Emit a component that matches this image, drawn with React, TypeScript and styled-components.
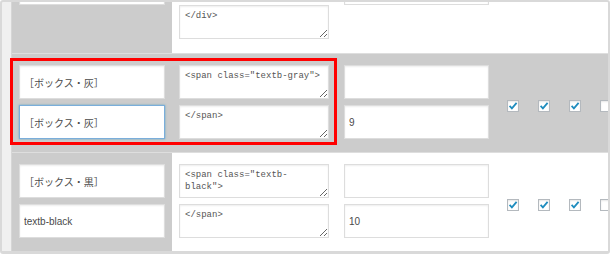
import React from "react";
import styled, { createGlobalStyle } from "styled-components";

const GlobalStyle = createGlobalStyle`
  html, body { margin: 0; padding: 0; background: #fff; }
  body { font-family: "Liberation Sans", "Noto Sans CJK JP", sans-serif; }
`;

const Frame = styled.div`
  position: relative;
  box-sizing: border-box;
  width: 610px;
  height: 254px;
  border: 2px solid #d9d9d9;
  border-bottom-width: 3px;
  border-radius: 3px;
  background: #f0f0f0;
  padding-left: 9px;
  overflow: hidden;
`;

const Table = styled.div`
  margin-top: -116px;
  border-left: 1px solid #d6d6d6;
  display: flex;
  flex-direction: column;
`;

const Row = styled.div<{ $shaded?: boolean; $pb: number }>`
  --pb: ${(p) => p.$pb}px;
  display: grid;
  grid-template-columns: 160px 165px 160px 1fr;
  background: ${(p) => (p.$shaded ? "#cccccc" : "#ffffff")};
  border-bottom: 1px solid #dedede;
  &:last-child { border-bottom: 0; }
`;

const HeadCell = styled.div`
  background: #cccccc;
  padding: 11px 7px var(--pb) 7px;
  display: flex;
  flex-direction: column;
  justify-content: center;
  gap: 6px;
`;

const Cell = styled.div`
  padding: 11px 8px var(--pb) 7px;
  display: flex;
  flex-direction: column;
  justify-content: center;
  gap: 6px;
`;

const CheckCell = styled.div`
  padding: 11px 0 var(--pb) 10px;
  display: flex;
  align-items: center;
  gap: 19px;
`;

const TextInput = styled.input<{ $focused?: boolean }>`
  box-sizing: border-box;
  width: 100%;
  height: 34px;
  margin: 0;
  padding: 0 4px;
  border: 1px solid ${(p) => (p.$focused ? "#7aaedb" : "#dddddd")};
  box-shadow: ${(p) =>
    p.$focused ? "0 0 2px rgba(30,140,190,0.6)" : "inset 0 1px 2px rgba(0,0,0,0.07)"};
  background: #fff;
  color: #4a4a4a;
  font: 10px "Liberation Sans", "Noto Sans CJK JP", sans-serif;
  outline: none;
`;

const CodeArea = styled.textarea<{ $h?: number }>`
  box-sizing: border-box;
  width: 100%;
  height: ${(p) => p.$h ?? 34}px;
  margin: 0;
  padding: 4px 5px;
  border: 1px solid #dddddd;
  box-shadow: inset 0 1px 2px rgba(0,0,0,0.07);
  background: #fff;
  color: #555;
  font: 9px/12px "Liberation Mono", monospace;
  outline: none;
  overflow: hidden;
`;

const Box = styled.span`
  flex: none;
  box-sizing: border-box;
  width: 12px;
  height: 12px;
  margin-top: 8px;
  border: 1px solid #b4b9be;
  background: #fff;
  box-shadow: inset 0 1px 2px rgba(0,0,0,0.1);
  display: flex;
  align-items: center;
  justify-content: center;
`;

const Highlight = styled.div`
  position: absolute;
  left: 8px;
  top: 56px;
  width: 327px;
  height: 87px;
  box-sizing: border-box;
  border: 3px solid #ff0000;
  pointer-events: none;
`;

const Check = ({ on }: { on: boolean }) => (
  <Box>
    {on && (
      <svg width="10" height="10" viewBox="0 0 10 10">
        <path d="M1.6 4.9 L3.9 7.4 L8.6 1.9" fill="none" stroke="#1e8cbe" strokeWidth="1.8" />
      </svg>
    )}
  </Box>
);

type RowData = {
  label: string;
  label2: string;
  focused?: boolean;
  start: string;
  startH?: number;
  end: string;
  access: string;
  order: string;
  shaded?: boolean;
  pb: number;
};

const rows: RowData[] = [
  {
    label: "［ボックス・赤］",
    label2: "textb-red",
    start: '<div class="textb-red">\n',
    startH: 102,
    end: "</div>",
    access: "",
    order: "8",
    pb: 14,
  },
  {
    label: "［ボックス・灰］",
    label2: "［ボックス・灰］",
    focused: true,
    start: '<span class="textb-gray">',
    end: "</span>",
    access: "",
    order: "9",
    shaded: true,
    pb: 13,
  },
  {
    label: "［ボックス・黒］",
    label2: "textb-black",
    start: '<span class="textb-black">',
    end: "</span>",
    access: "",
    order: "10",
    pb: 13,
  },
];

export default function App() {
  return (
    <>
      <GlobalStyle />
      <Frame>
        <Table>
          {rows.map((r, i) => (
            <Row key={i} $shaded={r.shaded} $pb={r.pb}>
              <HeadCell>
                <TextInput readOnly value={r.label} />
                <TextInput readOnly value={r.label2} $focused={r.focused} />
              </HeadCell>
              <Cell>
                <CodeArea readOnly value={r.start} $h={r.startH} />
                <CodeArea readOnly value={r.end} />
              </Cell>
              <Cell>
                <TextInput readOnly value={r.access} />
                <TextInput readOnly value={r.order} />
              </Cell>
              <CheckCell>
                <Check on />
                <Check on />
                <Check on />
                <Check on={false} />
              </CheckCell>
            </Row>
          ))}
        </Table>
        <Highlight />
      </Frame>
    </>
  );
}
